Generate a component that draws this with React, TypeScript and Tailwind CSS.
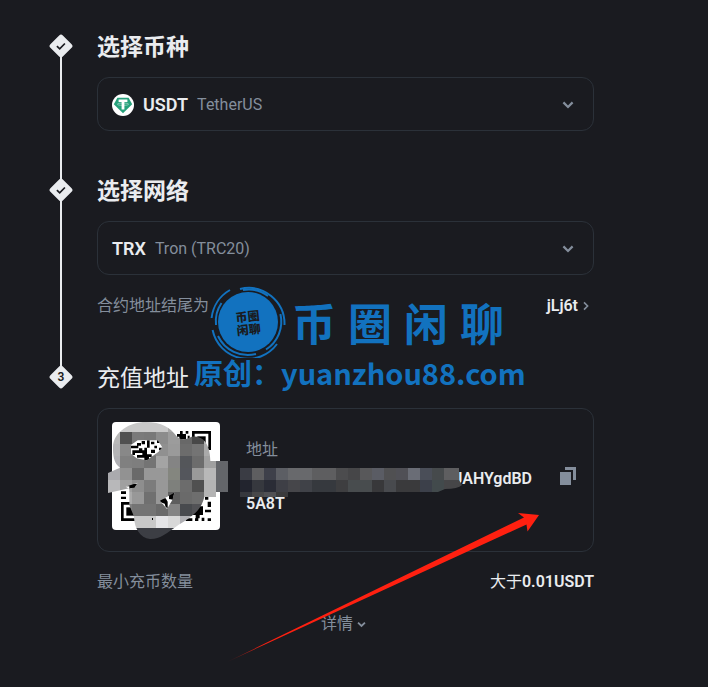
import type { ReactNode } from 'react'

const QR_ROWS = [
  ['#c0c0c0', '#c8c8c8', '#c8c8c8', '#c8c8c8', '#c8c8c8', '#a8a8a8', '#9c9c9c', '#8c8c8c', '#b4b4b4', ''],
  ['#b8b8b8', '#505050', '#7a7a7a', '#787878', '#8c8c8c', '#9c9c9c', '#686868', '#484848', '#b4b4b4', ''],
  ['#b4b4b6', '#888888', '#888888', '#808080', '#909090', '#9a9a9a', '#6c6c6c', '#747474', '#aaaaaa', ''],
  ['#b0b0b4', '#808080', '#7e7e7e', '#747474', '#a4a4a4', '#848484', '#54565a', '#6c6c6c', '#a0a0a0', '#64666a'],
  ['#aaaaae', '#929292', '#6a6a6a', '#989898', '#989898', '#84867f', '#54565c', '#9a9a9a', '#b8b8b8', '#64666a'],
  ['#b8b8ba', '#a0a0a0', '#8e8e8e', '#7c7c7c', '#989898', '#7e807c', '#6c6c6c', '#505050', '#b4b4b4', '#64666a'],
  ['#b8b8b8', '#aaaaaa', '#989898', '#707070', '#989898', '#5e5e5e', '#6a6a6a', '#6e6e6e', '#b4b4b4', ''],
  ['#808080', '#808080', '#747474', '#747474', '#6a6a6a', '#848484', '#484a4e', '#525256', '#525256', ''],
  ['#c8c8c8', '#c8c8c8', '#c8c8c8', '#c8c8c8', '#e4e4e6', '#d8d8d8', '#b0b0b4', '#888888', '#888888', ''],
  ['#3c3e44', '#3c3e44', '#3c3e44', '#3c3e44', '#3c3e44', '#3c3e44', '#3c3e44', '#3c3e44', '#3c3e44', ''],
]

const ADDRESS_ROWS = [
  ['#3a3c44', '#5e5e60', '#3e404a', '#5c5e64', '#68696c', '#68696c', '#5e5e60', '#5e5e60', '#4c4c4e', '#464648', '#58585a', '#5a5c64', '#505052', '#505056', '#6a6d76', '#4a4e58', '#464a4c', '#5e5e60'],
  ['#22242e', '#36383e', '#2a2c36', '#3e3f46', '#46464a', '#404248', '#36393e', '#36393e', '#3e3e40', '#484c4e', '#484c4e', '#38383a', '#484a4e', '#3a3a3c', '#3a3a3c', '#3c404a', '#424a4c', '#464648'],
  ['#36383e', '#48484a', '#505054', '#3a3a3c'],
]

const QR_BITS = [
  'M246 87h9v-9h8v9h10v16h-20v-8h-7z M272 78h8v8h-8z M278 92h6v10h-6z',
  'M78 259h15v8h-15z M78 275h15v7h-15z M94 236h34v9h-8v8h-17v-9h-9z',
  'M300 304h24v26h-10v10h-12v-10h-14v-14h12z M330 276h10v8h-10z M338 290h10v16h-10z M330 314h18v8h-18z M272 340h20v8h-20z M300 340h10v8h-10z M320 338h8v10h-8z M338 340h10v8h-10z',
  'M108 122h18v-8h12v8h-8v8h-22z M140 108h10v10h-10z M156 106h8v22h-8z M168 110h10v8h-10z M186 106h8v8h-8z M178 122h8v8h-8z M192 128h10v8h-10z M112 136h20v-6h10v14h-22v6h-8z M148 128h8v20h14v8h-8v10h-14v-8h-22v-8h16v-14h6z M168 134h12v10h-12z',
  'M195 280h17l6 10v20l-6-4-3-10-14-5z M222 262h16l-4 22-12-2z',
]

function StepMark({ children }: { children: ReactNode }) {
  return (
    <svg width="24" height="24" viewBox="0 0 24 24" className="shrink-0" aria-hidden="true">
      <rect x="3.2" y="3.2" width="17.6" height="17.6" rx="2.6" fill="#eaecef" transform="rotate(45 12 12)" />
      {children}
    </svg>
  )
}

function CheckMark() {
  return (
    <StepMark>
      <path d="M7.9 12.1l2.8 2.7 5.2-5.3" fill="none" stroke="#1a1b20" strokeWidth="1.7" />
    </StepMark>
  )
}

function NumberMark() {
  return (
    <StepMark>
      <text x="12" y="16.4" textAnchor="middle" fontSize="12" fontWeight="600" fill="#1a1b20">
        3
      </text>
    </StepMark>
  )
}

type StepProps = {
  title: string
  mark: ReactNode
  last?: boolean
  bold?: boolean
  children: ReactNode
}

function Step({ title, mark, last, bold, children }: StepProps) {
  return (
    <li className="flex gap-6">
      <div className="flex w-6 shrink-0 flex-col items-center">
        <div className="flex h-8 items-center">{mark}</div>
        {!last && <div className="-my-2 w-0.5 grow bg-[#eaecef]" />}
      </div>
      <div className="min-w-0 grow">
        <h2 className={`text-[23px] leading-[35px] ${bold ? 'font-bold' : 'font-normal'}`}>{title}</h2>
        {children}
      </div>
    </li>
  )
}

function Chevron() {
  return (
    <svg width="12" height="12" viewBox="0 0 12 12" aria-hidden="true">
      <path d="M1.4 3.4L6 8l4.6-4.6" fill="none" stroke="#848e9c" strokeWidth="2.2" />
    </svg>
  )
}

type PickerProps = { label: string; code: string; name: string; icon?: ReactNode }

function Picker({ label, code, name, icon }: PickerProps) {
  return (
    <div className="relative mt-3 flex h-[54px] items-center gap-[9px] rounded-xl border border-[#2b3139] pt-px pr-[19px] pl-3.5">
      {icon}
      <span className="text-lg font-semibold">{code}</span>
      <span className="grow text-base text-[#848e9c]">{name}</span>
      <Chevron />
      <select aria-label={label} className="absolute inset-0 w-full cursor-pointer opacity-0">
        <option>{code}</option>
      </select>
    </div>
  )
}

function TetherIcon() {
  return (
    <svg width="22" height="22" viewBox="0 0 22 22" className="shrink-0" aria-hidden="true">
      <circle cx="11" cy="11" r="11" fill="#fff" />
      <path d="M5.4 3.8h11.2L20.2 10.2 11 19.2 1.8 10.2z" fill="#26a17b" />
      <path d="M6.6 5.6h8.8v2.4h-3v7.6H9.600V8h-3z" fill="#fff" />
      <ellipse cx="11" cy="10.200" rx="5.600" ry="1.200" fill="none" stroke="#fff" strokeOpacity="0.7" strokeWidth="0.6" />
    </svg>
  )
}

function Finder({ x, y }: { x: number; y: number }) {
  return (
    <>
      <path d={`M${x} ${y}h57v57h-57z M${x + 8} ${y + 8}v41h41v-41z`} fill="#000" fillRule="evenodd" />
      <rect x={x + 16} y={y + 16} width="25" height="25" fill="#000" />
    </>
  )
}

function QrCode() {
  return (
    <div className="relative size-[108px] shrink-0 rounded bg-white">
      {/* three units to a pixel */}
      <svg
        width="120"
        height="120"
        viewBox="39 51 360 360"
        className="absolute top-0 -left-1"
        role="img"
        aria-label="QR"
      >
        <defs>
          <clipPath id="smudge">
            <path
              clipRule="evenodd"
              d="M75 188C60 178 53 160 54 125C56 80 105 51 152 51C200 51 226 68 246 95Q262 110 290 95C325 92 345 115 346 168H399V276H328C318 318 290 335 250 360C215 385 195 403 165 402C135 398 118 370 117 335L103 300V250L39 264V204Z
                 M108 120L128 106H188L202 127L190 141L155 166L125 160L108 146Z
                 M195 287L238 263L232 285L216 312Z
                 M92 245L128 233L118 248L100 250Z"
            />
          </clipPath>
        </defs>
        <path d="M108 120L128 106H188L202 127L190 141L155 166L125 160L108 146Z" fill="#fff" />
        <Finder x={291} y={78} />
        <Finder x={78} y={291} />
        {QR_BITS.map((d) => (
          <path key={d} d={d} />
        ))}
        <g clipPath="url(#smudge)" shapeRendering="crispEdges">
          {QR_ROWS.map((row, r) =>
            row.map((fill, c) =>
              fill ? <rect key={`${r}-${c}`} x={39 + c * 36} y={45 + r * 36} width="36" height="36" fill={fill} /> : null
            )
          )}
        </g>
        <rect x="171" y="339" width="3" height="6" />
      </svg>
    </div>
  )
}

function AddressSmudge() {
  return (
    <svg width="222" height="29" viewBox="0 0 222 29" className="absolute top-0.5 -left-1.5" aria-hidden="true">
      <defs>
        <clipPath id="address-smudge">
          <path d="M0 0H219V12L222 17Q218 21 205 21L198 24H48V29H0Z" />
        </clipPath>
      </defs>
      <g clipPath="url(#address-smudge)" shapeRendering="crispEdges">
        {ADDRESS_ROWS.map((row, r) =>
          row.map((fill, c) => (
            <rect key={`${r}-${c}`} x={c * 12} y={r * 12} width={c === 17 ? 18 : 12} height="12" fill={fill} />
          ))
        )}
      </g>
    </svg>
  )
}

function CopyIcon() {
  return (
    <svg width="16" height="18" viewBox="0 0 16 18" aria-hidden="true">
      <path d="M0 5h11v13H0z M5 0h11v13h-3V3H5z" fill="#848e9c" />
    </svg>
  )
}

function Watermark() {
  return (
    <div className="pointer-events-none absolute top-[286px] left-[194px] text-[#1272bf]">
      <div className="flex items-center pl-4">
        <svg width="76" height="72" viewBox="0 0 76 72" aria-hidden="true">
          <circle cx="38" cy="36" r="30" fill="#1272bf" />
          <g fill="none" stroke="#1272bf" strokeWidth="2">
            <path d="M1.600 32A37 37 0 0 1 20 4" />
            <path d="M30 3A36 36 0 0 1 74.500 39" />
            <path d="M2.600 44A36 36 0 0 0 67 58" />
            <path d="M6 39A32.500 32.500 0 0 1 11.500 17" />
            <path d="M33 4A32.500 32.500 0 0 1 58 10" />
            <path d="M70.400 28A33 33 0 0 1 56 63.500" />
            <path d="M8 50A33 33 0 0 0 46 68" />
          </g>
          <g
            fill="#1a1b20"
            fontSize="12"
            fontWeight="900"
            textAnchor="middle"
            transform="rotate(-6 38 36)"
          >
            <text x="38" y="35">币圈</text>
            <text x="38" y="48">闲聊</text>
          </g>
        </svg>
        <div className="flex gap-3 pt-2 pl-1.5 text-[44px] leading-[60px] font-bold">
          <span>币</span>
          <span>圈</span>
          <span>闲</span>
          <span>聊</span>
        </div>
      </div>
      <p className="text-[29px] leading-7 font-bold whitespace-nowrap font-['Noto_Sans_CJK_SC',sans-serif]">
        原创：yuanzhou88.com
      </p>
    </div>
  )
}

function Arrow() {
  return (
    <svg
      width="312"
      height="149"
      viewBox="0 0 312 149"
      className="pointer-events-none absolute top-[513px] left-[227px]"
      aria-hidden="true"
    >
      <defs>
        <linearGradient id="arrow-fade">
          <stop offset="0" stopColor="#ff2010" stopOpacity="0.2" />
          <stop offset="0.12" stopColor="#ff2010" />
        </linearGradient>
      </defs>
      <path d="M0 149L297 4.500L291 0L312 2L300.500 18.500L299.500 11.500Z" fill="url(#arrow-fade)" />
    </svg>
  )
}

export default function App() {
  return (
    <main className="relative min-h-screen bg-[#1a1b20] pt-[30px] pr-[114px] pb-12 pl-[49px] font-['Roboto','Noto_Sans_CJK_SC',sans-serif] text-[#eaecef]">
      <ol>
        <Step title="选择币种" mark={<CheckMark />} bold>
          <Picker label="选择币种" code="USDT" name="TetherUS" icon={<TetherIcon />} />
          <div className="h-[43px]" />
        </Step>

        <Step title="选择网络" mark={<CheckMark />} bold>
          <Picker label="选择网络" code="TRX" name="Tron (TRC20)" />
          <div className="mt-[19px] mb-[43px] flex items-center justify-between leading-6">
            <span className="text-[#848e9c]">合约地址结尾为</span>
            <a href="#contract" className="flex items-center gap-1 pr-1 font-semibold">
              jLj6t
              <svg width="8" height="10" viewBox="0 0 8 10" aria-hidden="true">
                <path d="M2 1.400L5.600 5L2 8.600" fill="none" stroke="#848e9c" strokeWidth="1.600" />
              </svg>
            </a>
          </div>
        </Step>

        <Step title="充值地址" mark={<NumberMark />} last>
          <div className="mt-3 flex items-center rounded-xl border border-[#2b3139] pt-[13px] pr-[17px] pb-[21px] pl-3.5">
            <QrCode />
            <div className="ml-[26px] grow self-start pt-4">
              <p className="leading-6 text-[#848e9c]">地址</p>
              <div className="relative mt-1 leading-[25px] font-semibold">
                <p className="text-right">JAHYgdBD</p>
                <p>5A8T</p>
                <AddressSmudge />
              </div>
            </div>
            <button type="button" aria-label="复制" className="ml-7 cursor-pointer">
              <CopyIcon />
            </button>
          </div>
          <div className="mt-[18px] flex items-center justify-between leading-6">
            <span className="text-[#848e9c]">最小充币数量</span>
            <span>
              大于<span className="font-semibold">0.01USDT</span>
            </span>
          </div>
          <div className="mt-[18px] flex justify-center">
            <button type="button" className="flex cursor-pointer items-center gap-1 pr-1 leading-6 text-[#848e9c]">
              详情
              <svg width="9" height="9" viewBox="0 0 12 12" aria-hidden="true">
                <path d="M1.400 3.400L6 8l4.600-4.600" fill="none" stroke="#848e9c" strokeWidth="2.400" />
              </svg>
            </button>
          </div>
        </Step>
      </ol>

      <Watermark />
      <Arrow />
    </main>
  )
}
